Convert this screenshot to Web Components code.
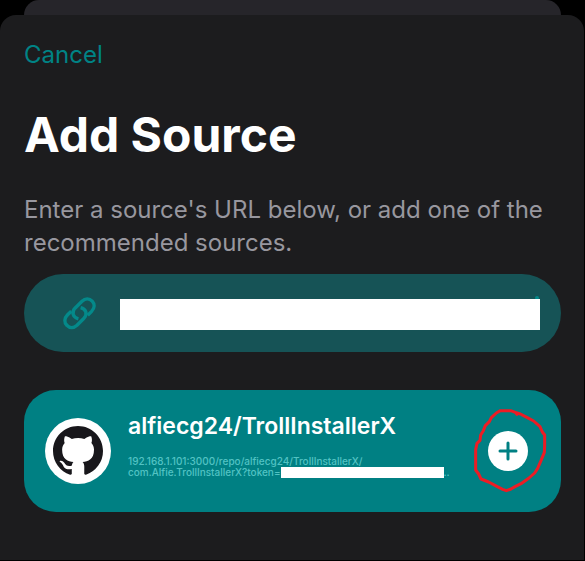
<!DOCTYPE html>
<html lang="en">
<head>
<meta charset="utf-8">
<meta name="viewport" content="width=device-width, initial-scale=1">
<title>Add Source</title>
<style>
html { background: #000; }
body { margin: 0; min-height: 100vh; display: flex; font-family: Inter, "Liberation Sans", sans-serif; color: #fff; }
</style>
</head>
<body>
<add-source-sheet>
  <cancel-button slot="nav">Cancel</cancel-button>
  <span slot="title">Add Source</span>
  <span slot="hint">Enter a source's URL below, or add one of the recommended sources.</span>
  <source-url-field></source-url-field>
  <source-card>
    <span slot="name">alfiecg24/TrollInstallerX</span>
    <span slot="host">192.168.1.101:3000/repo/alfiecg24/TrollInstallerX/</span>
    <span slot="path">com.Alfie.TrollInstallerX?token=</span>
  </source-card>
</add-source-sheet>
<script>
const define = (name, html) => customElements.define(name, class extends HTMLElement {
  constructor() {
    super();
    const t = document.createElement('template');
    t.innerHTML = html;
    this.attachShadow({ mode: 'open' }).append(t.content.cloneNode(true));
  }
});

define('add-source-sheet', `
<style>
:host { flex: 1; min-width: 0; display: flex; flex-direction: column; }
.behind { height: 15px; margin: 0 24px; background: #26252a; border-radius: 16px 16px 0 0; }
main { flex: 1; box-sizing: border-box; background: #1c1c1e; border-radius: 16px 16px 0 0; padding: 25px 23px 24px 24px; display: flex; flex-direction: column; margin-right: 1px; margin-bottom: 1px; }
h1 { margin: 35px 0 0; font-size: 48px; line-height: 60px; font-weight: 700; }
p { margin: 28px 0 15px; font-size: 24px; line-height: 33px; color: #98979f; }
</style>
<div class="behind"></div>
<main>
  <slot name="nav"></slot>
  <h1><slot name="title"></slot></h1>
  <p><slot name="hint"></slot></p>
  <slot></slot>
</main>`);

define('cancel-button', `
<style>
:host { display: flex; }
button { border: 0; padding: 0; background: none; font: inherit; font-size: 24px; line-height: 30px; color: #008385; cursor: pointer; }
</style>
<button type="button"><slot></slot></button>`);

define('source-url-field', `
<style>
:host { display: block; }
label { position: relative; display: flex; align-items: center; gap: 22px; height: 78px; box-sizing: border-box; padding: 2px 21px 0 38px; border-radius: 39px; background: #165356; }
label::before { content: ""; position: absolute; right: 22px; top: 22px; width: 4px; height: 4px; border-radius: 50%; background: #04898a; }
svg { flex: none; width: 36px; height: 36px; margin-top: -2px; }
input { flex: 1; min-width: 0; height: 31px; box-sizing: border-box; border: 0; border-radius: 0; padding: 0 8px; margin: 0; background: #fff; color: #165356; font: inherit; font-size: 20px; outline: 0; position: relative; }
</style>
<label>
  <svg viewBox="0 0 36 36" fill="none" stroke="#04898a" stroke-width="3.4" aria-hidden="true">
    <path d="M9.3 16.2 L5.6 19.8 C2 23.5 2.2 27.6 4.8 30.3 C7.6 33.2 11.8 33.2 15 30.2 L22 23.2 C25.6 19.4 24.4 14 18.6 12.6"/>
    <path d="M25.7 20.2 L29.4 16.6 C33 12.9 32.8 8.8 30.2 6.1 C27.4 3.2 23.2 3.2 20 6.2 L13 13.2 C9.4 17 10.6 22.4 16.4 23.8"/>
  </svg>
  <input type="url" aria-label="Source URL">
</label>`);

define('source-card', `
<style>
:host { display: flex; align-items: center; height: 122px; box-sizing: border-box; margin-top: 38px; padding: 0 33px 0 21px; border-radius: 32px; background: #008083; }
.avatar { flex: none; width: 66px; height: 66px; border-radius: 50%; background: #fff; display: grid; place-items: center; }
.avatar svg { width: 50px; height: 50px; }
.text { flex: 1; min-width: 0; margin-left: 17px; padding-bottom: 14px; }
h2 { margin: 0; font-size: 23px; line-height: 30px; font-weight: 600; white-space: nowrap; }
.url { margin-top: 15px; font-size: 10px; line-height: 11px; font-weight: 500; color: #52c3c3; white-space: nowrap; }
.line { display: flex; align-items: center; }
.mask { width: 163px; height: 11px; background: #fff; }
</style>
<div class="avatar">
  <svg viewBox="0 0 16 16" role="img" aria-label="GitHub"><path fill="#18171b" d="M8 0C3.58 0 0 3.58 0 8c0 3.54 2.29 6.53 5.47 7.59.4.07.55-.17.55-.38 0-.19-.01-.82-.01-1.49-2.01.37-2.53-.49-2.69-.94-.09-.23-.48-.94-.82-1.13-.28-.15-.68-.52-.01-.53.63-.01 1.08.58 1.23.82.72 1.21 1.87.87 2.33.66.07-.52.28-.87.51-1.07-1.78-.2-3.64-.89-3.64-3.95 0-.87.31-1.59.82-2.15-.08-.2-.36-1.02.08-2.12 0 0 .67-.21 2.2.82.64-.18 1.32-.27 2-.27s1.36.09 2 .27c1.53-1.04 2.2-.82 2.2-.82.44 1.1.16 1.92.08 2.12.51.56.82 1.27.82 2.15 0 3.07-1.87 3.75-3.65 3.95.29.25.54.73.54 1.48 0 1.07-.01 1.93-.01 2.2 0 .21.15.46.55.38A8.01 8.01 0 0 0 16 8c0-4.42-3.58-8-8-8Z"/></svg>
</div>
<div class="text">
  <h2><slot name="name"></slot></h2>
  <div class="url">
    <div><slot name="host"></slot></div>
    <div class="line"><slot name="path"></slot><span class="mask"></span><span>..</span></div>
  </div>
</div>
<add-button></add-button>`);

define('add-button', `
<style>
:host { position: relative; flex: none; display: block; width: 40px; height: 40px; }
button { width: 40px; height: 40px; padding: 0; border: 0; border-radius: 50%; background: #fff; display: grid; place-items: center; cursor: pointer; }
.ring { position: absolute; left: -18px; top: -26px; width: 80px; height: 90px; pointer-events: none; }
</style>
<button type="button" aria-label="Add source">
  <svg width="20" height="20" viewBox="0 0 20 20" stroke="#008083" stroke-width="3" stroke-linecap="round"><path d="M10 2V18M2 10H18"/></svg>
</button>
<svg class="ring" viewBox="90 15 240 270" fill="none" stroke="#ed1c24" stroke-width="9" stroke-linecap="round" stroke-linejoin="round" aria-hidden="true">
  <path d="M231 43L226 37L212 32H181L169 39L154 53L148 65L136 77L130 92L122 105L120 121L111 130L107 149V210L116 222L123 237L146 246L172 260L188 268L199 272L213 267L225 260L243 251L267 234L284 219L293 205L303 182L313 157L314 137V105L307 96L300 80L281 63L262 53L241 42L226 37"/>
</svg>`);
</script>
</body>
</html>
